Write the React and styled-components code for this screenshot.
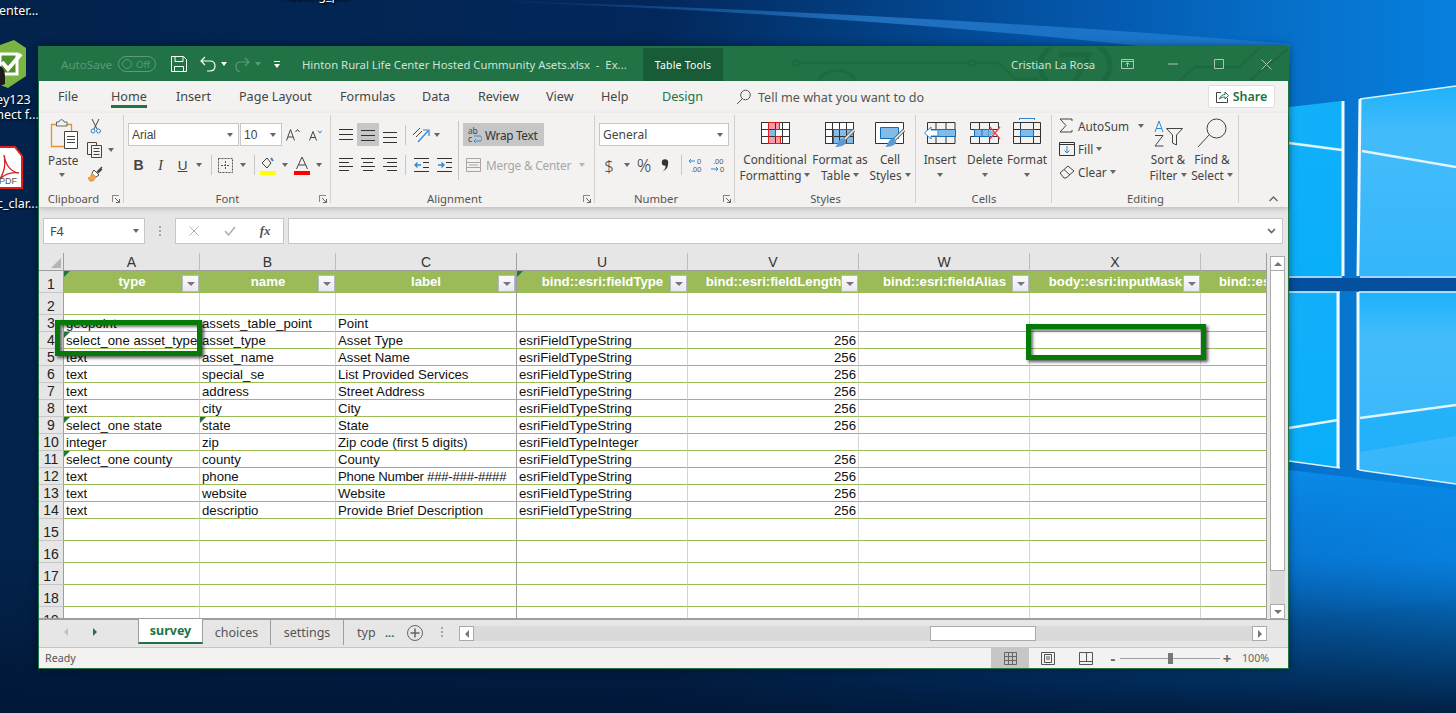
import React from "react";
import styled, { createGlobalStyle } from "styled-components";

const GlobalStyle = createGlobalStyle`
  html, body { margin: 0; padding: 0; height: 100%; overflow: hidden; }
  body { font-family: "Noto Sans", sans-serif; }
  * { box-sizing: border-box; }
`;

const BLUE = "#2b88d8";
const FILLBLUE = "#83bbe8";

//Desktop
const Desktop = styled.div`
  position: relative;
  width: 1456px;
  height: 713px;
  overflow: hidden;
  background:
    linear-gradient(180deg, rgba(0, 20, 50, 0) 78%, rgba(0, 22, 52, 0.9) 100%),
    linear-gradient(90deg, #03234c 0, #02275a 45%, #0458ad 75%, #0672cc 90%, #0680de 100%);
`;
const Wallpaper = styled.svg`
  position: absolute;
  left: 0;
  top: 0;
`;
const DeskLabel = styled.div`
  position: absolute;
  left: ${(p) => p.$x}px;
  top: ${(p) => p.$y}px;
  color: #fff;
  font-size: 12.5px;
  line-height: 15px;
  white-space: nowrap;
  text-shadow: 1px 1px 2px #000;
`;
const DeskIcon = styled.svg`
  position: absolute;
  left: 0;
  top: ${(p) => p.$y}px;
`;

//Window
const Window = styled.div`
  position: absolute;
  left: 38px;
  top: 46px;
  width: 1251px;
  height: 623px;
  display: flex;
  flex-direction: column;
  border: 1px solid #217346;
  background: #e6e6e6;
  box-shadow: 0 0 8px rgba(0, 0, 0, 0.45);
`;

const TitleBar = styled.div`
  position: relative;
  height: 34px;
  flex: none;
  display: flex;
  align-items: center;
  background: #217346;
  color: #cfe2d6;
  font-size: 11.3px;
`;
const Circuit = styled.svg`
  position: absolute;
  left: 0;
  top: 0;
`;
const AutoSave = styled.span`
  position: relative;
  margin-left: 22px;
  color: #5c9a78;
  font-size: 11.6px;
  width: 57px;
  flex: none;
`;
const Toggle = styled.span`
  position: relative;
  width: 38px;
  height: 16px;
  flex: none;
  border: 1px solid #5c9a78;
  border-radius: 8px;
  display: flex;
  align-items: center;
  gap: 4px;
  padding-left: 3px;
  color: #5c9a78;
  font-size: 9.5px;
  &::before {
    content: "";
    width: 8px;
    height: 8px;
    border-radius: 50%;
    border: 1px solid #5c9a78;
  }
`;
const TitleSlot = styled.span`
  position: relative;
  width: ${(p) => p.$w}px;
  padding-left: ${(p) => p.$pad || 0}px;
  flex: none;
  display: flex;
  align-items: center;
  justify-content: ${(p) => (p.$left ? "flex-start" : "center")};
  white-space: nowrap;
`;
const ContextTab = styled.div`
  position: relative;
  width: 80px;
  height: 33px;
  flex: none;
  margin-top: 1px;
  align-self: flex-start;
  display: flex;
  align-items: center;
  justify-content: center;
  background: #185c37;
  color: #fff;
  font-size: 10.5px;
  letter-spacing: 0.2px;
`;

const TabRow = styled.div`
  height: 32px;
  flex: none;
  display: flex;
  align-items: center;
  padding-left: 19px;
  background: #f3f2f1;
  color: #444;
  font-size: 12.6px;
`;
const Tab = styled.div`
  width: ${(p) => p.$w}px;
  flex: none;
  color: ${(p) => (p.$green ? "#217346" : "#444")};
  span {
    display: inline-block;
    height: 22px;
    line-height: 16px;
    padding-top: 3px;
    border-bottom: 3px solid ${(p) => (p.$active ? "#217346" : "transparent")};
  }
`;
const TellMe = styled.div`
  display: flex;
  align-items: center;
  gap: 7px;
  width: 472px;
  flex: none;
  color: #555;
`;
const ShareButton = styled.div`
  width: 67px;
  height: 23px;
  margin-bottom: 2px;
  display: flex;
  align-items: center;
  justify-content: center;
  gap: 4px;
  background: #fff;
  border: 1px solid #e1dfdd;
  border-radius: 2px;
  color: #217346;
  font-weight: 600;
  font-size: 12.5px;
`;

//Ribbon
const Ribbon = styled.div`
  position: relative;
  z-index: 1;
  height: 94px;
  flex: none;
  display: flex;
  padding-top: 2px;
  background: #f3f2f1;
  color: #444;
  font-size: 11.8px;
  box-shadow: 0 2px 5px rgba(0, 0, 0, 0.18);
`;
const Group = styled.div`
  position: relative;
  width: ${(p) => p.$w}px;
  height: 91px;
  flex: none;
  display: flex;
  flex-direction: column;
  background: linear-gradient(#d2d0ce, #d2d0ce) right top / 1px 88px no-repeat;
`;
const GroupBody = styled.div`
  flex: 1;
  display: flex;
  min-height: 0;
  padding-left: ${(p) => p.$pad || 0}px;
`;
const GroupLabel = styled.div`
  height: 14px;
  line-height: 14px;
  text-align: center;
  font-size: 11.3px;
  color: #555;
  white-space: nowrap;
  padding-right: ${(p) => p.$shift || 0}px;
`;
const Launcher = styled.svg`
  position: absolute;
  right: 4px;
  bottom: 3px;
`;
const Collapse = styled.svg`
  position: absolute;
  left: 1230px;
  top: 83px;
`;
const Stack = styled.div`
  display: flex;
  flex-direction: column;
  gap: 9px;
  padding-top: 8px;
  width: ${(p) => (p.$w ? `${p.$w}px` : "auto")};
  flex: none;
`;
const ToolRow = styled.div`
  display: flex;
  align-items: center;
  height: ${(p) => p.$h || 23}px;
`;
const Cell = styled.div`
  width: ${(p) => p.$w}px;
  height: 100%;
  flex: none;
  display: flex;
  align-items: center;
  justify-content: center;
  background: ${(p) => (p.$on ? "#c6c6c6" : "transparent")};
`;
const Caret = styled.i`
  display: block;
  flex: none;
  width: 0;
  height: 0;
  margin-left: ${(p) => p.$ml || 0}px;
  border-left: 3.5px solid transparent;
  border-right: 3.5px solid transparent;
  border-top: 4px solid ${(p) => p.$color || "#666"};
`;
const PasteCaret = styled(Caret)`
  margin: 5px 0 0 9px;
`;
const Divider = styled.i`
  display: block;
  width: 1px;
  height: ${(p) => p.$h || 20}px;
  background: #c8c6c4;
`;
const Combo = styled.div`
  width: ${(p) => p.$w}px;
  height: 23px;
  flex: none;
  display: flex;
  align-items: center;
  justify-content: space-between;
  padding: 0 5px 0 3px;
  margin-right: ${(p) => p.$mr || 0}px;
  background: #fff;
  border: 1px solid #c6c6c6;
  color: #444;
  font-size: 12px;
`;
const ComboArial = styled.span`
  font-family: "Liberation Sans", Arial, sans-serif;
  font-size: 12px;
`;
const Glyph = styled(Cell)`
  font-family: ${(p) => p.$font || "inherit"};
  font-size: ${(p) => p.$size}px;
  font-weight: ${(p) => p.$weight || 400};
  font-style: ${(p) => (p.$italic ? "italic" : "normal")};
  text-decoration: ${(p) => (p.$under ? "underline" : "none")};
`;
const VerticalRule = styled.div`
  width: 1px;
  height: 59px;
  margin-top: 6px;
  flex: none;
  background: #c8c6c4;
`;
const RightStack = styled(Stack)`
  padding-left: 4px;
`;
const WrapButton = styled.div`
  width: 81px;
  height: 23px;
  display: flex;
  align-items: center;
  gap: 3px;
  padding-left: 5px;
  background: #c6c6c6;
  color: #333;
  letter-spacing: -0.3px;
`;
const MergeButton = styled.div`
  display: flex;
  align-items: center;
  height: 20px;
  padding-left: 3px;
  gap: 5px;
  color: #a6a6a6;
  letter-spacing: -0.2px;
`;
const BigButton = styled.div`
  width: ${(p) => p.$w}px;
  flex: none;
  display: flex;
  flex-direction: column;
  align-items: center;
  padding-top: ${(p) => p.$top ?? 7}px;
  line-height: 16px;
  white-space: nowrap;
`;
const BigIcon = styled.div`
  height: ${(p) => p.$h ?? 29}px;
  flex: none;
  display: flex;
  align-items: flex-start;
`;
const BigLine = styled.div`
  display: flex;
  align-items: center;
  justify-content: center;
  gap: 3px;
  height: 16px;
`;
const SmallStack = styled.div`
  width: ${(p) => p.$w}px;
  flex: none;
  padding-left: 7px;
  margin-top: -1px;
`;
const SmallRow = styled.div`
  height: 23px;
  display: flex;
  align-items: center;
  white-space: nowrap;
  svg { margin-right: 3px; }
`;
const SmallIcon = styled.div`
  width: 19px;
  flex: none;
  display: flex;
`;
const PasteColumn = styled.div`
  width: 48px;
  flex: none;
  padding-left: 11px;
  padding-top: 4px;
  line-height: 16px;
`;
const PasteLabel = styled.div`
  margin: 3px 0 0 -2px;
`;
const ClipTools = styled.div`
  display: flex;
  flex-direction: column;
  gap: 8px;
  padding-top: 3px;
`;
const ClipTool = styled.div`
  display: flex;
  align-items: center;
  padding-left: ${(p) => p.$pad || 0}px;
  gap: 6px;
`;

//Formula bar
const FormulaArea = styled.div`
  height: 46px;
  flex: none;
  display: flex;
  padding: 11px 5px 9px 4px;
  background: #e6e6e6;
`;
const FormulaBox = styled.div`
  height: 26px;
  width: ${(p) => (p.$w ? `${p.$w}px` : "auto")};
  flex: ${(p) => (p.$w ? "none" : 1)};
  display: flex;
  align-items: center;
  background: #fff;
  border: 1px solid #c6c6c6;
  color: #444;
  font-size: 12.5px;
`;
const FormulaInput = styled(FormulaBox)`
  margin-left: 4px;
  justify-content: flex-end;
  padding-right: 6px;
`;
const NameBoxText = styled.span`
  flex: 1;
  padding-left: 6px;
`;
const NameCaret = styled(Caret)`
  margin-right: 5px;
`;
const Grip = styled.div`
  width: 30px;
  flex: none;
  display: flex;
  flex-direction: column;
  align-items: center;
  justify-content: center;
  gap: 2px;
  i {
    width: 2px;
    height: 2px;
    background: #a6a6a6;
    display: block;
  }
`;
const FormulaTool = styled.span`
  flex: 1;
  display: flex;
  justify-content: center;
  font-family: "Liberation Serif", serif;
  font-style: italic;
  font-weight: 700;
  font-size: 13px;
  color: ${(p) => p.$color};
`;

//Sheet
const SheetArea = styled.div`
  position: relative;
  height: 366px;
  flex: none;
  display: flex;
  background: #e6e6e6;
`;
const Grid = styled.div`
  width: 1228px;
  height: 366px;
  flex: none;
  display: grid;
  grid-template-columns: 25px 136px 136px 181px repeat(4, 171px) 66px;
  grid-template-rows: 18px 22px 22px repeat(12, 17px) repeat(5, 22px);
  font-family: "Liberation Sans", Arial, sans-serif;
  overflow: hidden;
  border-bottom: 1px solid #9e9e9e;
  border-right: 1px solid #9e9e9e;
`;
const Corner = styled.div`
  position: relative;
  border-bottom: 1px solid #9e9e9e;
  border-right: 1px solid #9e9e9e;
  &::after {
    content: "";
    position: absolute;
    right: 2px;
    bottom: 2px;
    border-left: 10px solid transparent;
    border-bottom: 10px solid #b4b4b4;
  }
`;
const ColLetter = styled.div`
  display: flex;
  align-items: center;
  justify-content: center;
  font-size: 14px;
  color: #333;
  border-bottom: 1px solid #9e9e9e;
  border-right: 1px solid ${(p) => (p.$hidden ? "#9e9e9e" : "#bdbdbd")};
`;
const RowNum = styled.div`
  display: flex;
  align-items: flex-end;
  justify-content: center;
  font-size: 14px;
  line-height: 14px;
  color: #222;
  padding-bottom: 1px;
  border-bottom: 1px solid #c6c6c6;
  border-right: 1px solid #9e9e9e;
`;
const flagged = `
  &::before {
    content: "";
    position: absolute;
    left: 0;
    top: 0;
    border-top: 6px solid #217346;
    border-right: 6px solid transparent;
  }
`;
const DataCell = styled.div`
  position: relative;
  background: #fff;
  padding: 1px 2px 0;
  font-size: 13.2px;
  line-height: 15px;
  color: #111;
  white-space: nowrap;
  overflow: hidden;
  text-align: ${(p) => (p.$right ? "right" : "left")};
  letter-spacing: ${(p) => (p.$tight ? "-0.25px" : "normal")};
  border-bottom: 1px solid #9bbb59;
  border-right: 1px solid ${(p) => (p.$hidden ? "#9e9e9e" : "#d4d4d4")};
  ${(p) => (p.$flag ? flagged : "")}
`;
const HeadCell = styled.div`
  position: relative;
  background: #9bbb59;
  color: #fff;
  font-weight: 700;
  font-size: 13.2px;
  line-height: 21px;
  white-space: nowrap;
  overflow: hidden;
  text-align: ${(p) => (p.$clip ? "left" : "center")};
  padding-left: ${(p) => (p.$clip ? 18 : 0)}px;
  border-right: ${(p) => (p.$hidden ? "1px solid #9e9e9e" : "none")};
  ${(p) => (p.$flag ? flagged : "")}
`;
const FilterButton = styled.div`
  position: absolute;
  right: 1px;
  top: 4px;
  width: 17px;
  height: 17px;
  display: flex;
  align-items: center;
  justify-content: center;
  background: linear-gradient(180deg, #fbfbfd, #e8e9f1);
  border: 1px solid #b5b9c6;
`;
const Highlight = styled.div`
  position: absolute;
  left: ${(p) => p.$x}px;
  top: ${(p) => p.$y}px;
  width: ${(p) => p.$w}px;
  height: 36px;
  border: 5px solid #067a06;
  box-shadow: 2px 2px 3px rgba(0, 0, 0, 0.65), inset 2px 2px 3px rgba(0, 0, 0, 0.55);
`;
const VScroll = styled.div`
  width: 15px;
  margin-left: 3px;
  padding-top: 3px;
  display: flex;
  flex-direction: column;
`;
const ScrollButton = styled.div`
  height: 15px;
  width: 15px;
  flex: none;
  display: flex;
  align-items: center;
  justify-content: center;
  background: #fff;
  border: 1px solid #ababab;
`;
const VThumb = styled.div`
  height: 300px;
  flex: none;
  background: #fff;
  border: 1px solid #ababab;
  border-top: none;
`;
const VTrack = styled.div`
  flex: 1;
  background: #dadada;
`;
const Up = styled.i`
  border-left: 4px solid transparent;
  border-right: 4px solid transparent;
  border-bottom: 4px solid #777;
`;
const Down = styled.i`
  border-left: 4px solid transparent;
  border-right: 4px solid transparent;
  border-top: 4px solid #777;
`;
const Side = styled.i`
  border-top: 4px solid transparent;
  border-bottom: 4px solid transparent;
  ${(p) => (p.$left ? "border-right" : "border-left")}: 4px solid ${(p) => p.$color || "#777"};
`;

//Sheet tabs
const TabsBar = styled.div`
  height: 29px;
  flex: none;
  display: flex;
  align-items: flex-start;
  border-top: 1px solid #9e9e9e;
  border-bottom: 1px solid #c6c6c6;
  background: #e6e6e6;
  color: #555;
  font-size: 12.5px;
`;
const TabNav = styled.div`
  width: 99px;
  height: 24px;
  flex: none;
  display: flex;
  align-items: center;
  gap: 25px;
  padding-left: 25px;
`;
const SheetTab = styled.div`
  width: ${(p) => p.$w}px;
  height: 25px;
  flex: none;
  display: flex;
  align-items: center;
  justify-content: ${(p) => (p.$left ? "flex-start" : "center")};
  padding-left: ${(p) => (p.$left ? 13 : 0)}px;
  margin-top: ${(p) => (p.$active ? -1 : 0)}px;
  background: ${(p) => (p.$active ? "#fff" : "transparent")};
  color: ${(p) => (p.$active ? "#217346" : "#555")};
  font-weight: ${(p) => (p.$active ? 700 : 400)};
  border-left: ${(p) => (p.$active ? "1px solid #9e9e9e" : "none")};
  border-right: 1px solid ${(p) => (p.$active ? "#9e9e9e" : p.$plain ? "transparent" : "#9e9e9e")};
  border-bottom: ${(p) => (p.$active ? "2px solid #217346" : "none")};
`;
const TabMore = styled.div`
  width: 48px;
  height: 25px;
  flex: none;
  display: flex;
  align-items: center;
  gap: 13px;
  color: #217346;
  font-weight: 700;
  font-size: 11px;
`;
const TabGrip = styled(Grip)`
  width: 18px;
  height: 24px;
  margin-right: 8px;
`;
const HScroll = styled.div`
  width: 808px;
  height: 15px;
  margin-top: 6px;
  flex: none;
  display: flex;
  background: #dadada;
`;
const HThumb = styled.div`
  width: 106px;
  margin-left: 456px;
  flex: none;
  background: #fff;
  border: 1px solid #ababab;
`;
const Spring = styled.div`
  flex: 1;
`;

//Status bar
const StatusBar = styled.div`
  height: 20px;
  flex: none;
  display: flex;
  align-items: center;
  background: #f3f2f1;
  color: #555;
  font-size: 10.7px;
`;
const StatusText = styled.span`
  width: 952px;
  padding-left: 6px;
  flex: none;
`;
const ViewButton = styled.div`
  width: 38px;
  height: 100%;
  flex: none;
  display: flex;
  align-items: center;
  justify-content: center;
  background: ${(p) => (p.$on ? "#c6c6c6" : "transparent")};
`;
const Zoomer = styled.div`
  display: flex;
  align-items: center;
  margin-left: 3px;
`;
const ZoomSign = styled.span`
  width: 10px;
  font-size: 15px;
  font-weight: 700;
  line-height: 16px;
  text-align: center;
  color: #666;
`;
const ZoomTrack = styled.div`
  position: relative;
  width: 100px;
  height: 1px;
  margin: 0 2px;
  background: #9e9e9e;
`;
const ZoomThumb = styled.i`
  position: absolute;
  left: 48px;
  top: -5px;
  width: 5px;
  height: 11px;
  background: #777;
`;
const ZoomValue = styled.span`
  margin-left: 10px;
  color: #666;
`;

//Icons
const Svg = ({ w, h, children, ...rest }) => (
  <svg width={w} height={h} viewBox={`0 0 ${w} ${h}`} fill="none" style={{ display: "block", flex: "none" }} {...rest}>
    {children}
  </svg>
);

const AlignV = ({ at }) => (
  <Svg w={14} h={16}>
    {[0, 5, 10].map((d) => (
      <path key={d} d={`M0 ${at + d}.5H14`} stroke="#333" />
    ))}
  </Svg>
);
const AlignH = ({ mode }) => {
  const x = (w) => (mode === "l" ? [0, w] : mode === "r" ? [14 - w, 14] : [(14 - w) / 2, (14 + w) / 2]);
  return (
    <Svg w={14} h={14}>
      {[14, 10, 14, 10].map((w, i) => (
        <path key={i} d={`M${x(w)[0]} ${i * 4 + 0.5}H${x(w)[1]}`} stroke="#333" />
      ))}
    </Svg>
  );
};
const Indent = ({ flip }) => (
  <Svg w={15} h={14}>
    <path d="M0 .5H15M0 13.5H15" stroke="#333" />
    <path d="M9 4.5H15M9 9.5H15" stroke="#333" />
    <path d={flip ? "M1 7H7M4.5 4.5L7 7L4.5 9.5" : "M7 7H1M3.5 4.5L1 7L3.5 9.5"} stroke={BLUE} strokeWidth="1.3" />
  </Svg>
);
const Launch = () => (
  <Launcher width="8" height="8" viewBox="0 0 8 8" fill="none">
    <path d="M0 .5H7M.5 0V7" stroke="#888" />
    <path d="M3 3L7.5 7.5M7.5 4V7.5H4" stroke="#666" />
  </Launcher>
);
const SheetGrid = ({ children }) => (
  <>
    <path d="M.5 .5H28.5V21.5H.5Z" fill="#fff" stroke="#333" />
    {children}
    <path d="M.5 7.5H28.5M.5 14.5H28.5M7.5 .5V21.5M14.5 .5V21.5M21.5 .5V21.5" stroke="#333" />
    <path d="M.5 .5H28.5V21.5H.5Z" stroke="#333" />
  </>
);
const Brush = () => (
  <>
    <path d="M29 8L20 17" stroke="#666" strokeWidth="3.4" />
    <path d="M29 8L20 17" stroke="#f3f2f1" strokeWidth="1.6" />
    <path d="M16 17C20 16 22 18 21 21C19 24 14 25 10 25C13 23 13 19 16 17Z" fill="#5b9bd5" />
  </>
);

const ROWS = [
  ["geopoint", "assets_table_point", "Point", "", ""],
  ["select_one asset_type", "asset_type", "Asset Type", "esriFieldTypeString", "256"],
  ["text", "asset_name", "Asset Name", "esriFieldTypeString", "256"],
  ["text", "special_se", "List Provided Services", "esriFieldTypeString", "256"],
  ["text", "address", "Street Address", "esriFieldTypeString", "256"],
  ["text", "city", "City", "esriFieldTypeString", "256"],
  ["select_one state", "state", "State", "esriFieldTypeString", "256"],
  ["integer", "zip", "Zip code (first 5 digits)", "esriFieldTypeInteger", ""],
  ["select_one county", "county", "County", "esriFieldTypeString", "256"],
  ["text", "phone", "Phone Number ###-###-####", "esriFieldTypeString", "256"],
  ["text", "website", "Website", "esriFieldTypeString", "256"],
  ["text", "descriptio", "Provide Brief Description", "esriFieldTypeString", "256"],
];
const FLAGS = { 4: [0], 9: [0, 1], 11: [0] };
const LETTERS = ["A", "B", "C", "U", "V", "W", "X", ""];
const HEADS = ["type", "name", "label", "bind::esri:fieldType", "bind::esri:fieldLength", "bind::esri:fieldAlias", "body::esri:inputMask"];

const renderRow = (num, values = []) => (
  <React.Fragment key={num}>
    <RowNum>{num}</RowNum>
    {Array.from({ length: 8 }).map((_, i) => (
      <DataCell
        key={i}
        $right={i === 4}
        $hidden={i === 2}
        $flag={(FLAGS[num] || []).includes(i)}
        $tight={(values[i] || "").includes("#")}
      >
        {values[i] || ""}
      </DataCell>
    ))}
  </React.Fragment>
);

const App = () => {
  return (
    <Desktop>
      <GlobalStyle />
      <Wallpaper width="1456" height="713" viewBox="0 0 1456 713" fill="none">
        <defs>
          <linearGradient id="streak" x1="0" x2="1">
            <stop offset="0" stopColor="#2a7fd0" stopOpacity="0" />
            <stop offset="0.5" stopColor="#2a7fd0" stopOpacity="0.75" />
            <stop offset="1" stopColor="#2a8ae0" stopOpacity="0.5" />
          </linearGradient>
          <linearGradient id="pane" x1="0" x2="0" y1="0" y2="1">
            <stop offset="0" stopColor="#12b0fb" />
            <stop offset="1" stopColor="#09aef9" />
          </linearGradient>
          <linearGradient id="paneR" x1="0" x2="0" y1="0" y2="1">
            <stop offset="0" stopColor="#1fb2fa" />
            <stop offset="0.25" stopColor="#44bcfb" />
            <stop offset="1" stopColor="#35b6fa" />
          </linearGradient>
          <linearGradient id="lowLight" x1="0" x2="0" y1="0" y2="1">
            <stop offset="0" stopColor="#0a8ae8" />
            <stop offset="1" stopColor="#0878d8" stopOpacity="0" />
          </linearGradient>
        </defs>
        <path d="M460 0C700 8 1000 26 1290 64L1290 44C1000 20 700 6 460 0Z" fill="url(#streak)" />
        <path d="M1289 470L1456 490V600L1289 620Z" fill="url(#lowLight)" />
        <path d="M1289 278H1456V291H1289Z" fill="#04509f" />
        <path d="M1289 107L1342 101V276H1289Z" fill="url(#pane)" stroke="none" />
        <path d="M1360 99L1456 86V276H1360Z" fill="url(#paneR)" />
        <path d="M1289 292H1340V468L1289 461Z" fill="url(#pane)" />
        <path d="M1359 292H1456V484L1359 470Z" fill="url(#paneR)" />
        <path d="M1359 418L1456 405V436L1359 452Z" fill="#0cacf8" opacity="0.5" />
        <path d="M1289 143L1342 150M1362 151L1456 167M1360 418L1456 405M1289 428L1338 420" stroke="#dff5ff" strokeWidth="2.5" />
        <path d="M1289 277H1342M1360 277H1456M1359 292H1456M1289 292H1340M1289 461L1340 468M1359 470L1456 484M1360 99L1456 86" stroke="#d6f2ff" strokeWidth="1.5" />
        <path d="M1343 101V276M1360 99L1358 276M1338 292V468M1358 292V470" stroke="#eefaff" strokeWidth="3" />
      </Wallpaper>

      <DeskLabel $x={280} $y={-12}>Hosting_p...</DeskLabel>
      <DeskLabel $x={-9} $y={3}>Center...</DeskLabel>
      <DeskLabel $x={-30} $y={92}>Survey123</DeskLabel>
      <DeskLabel $x={-27} $y={107}>Connect f...</DeskLabel>
      <DeskLabel $x={-3} $y={196}>c_clar...</DeskLabel>
      <DeskIcon $y={40} width="27" height="48" viewBox="0 0 27 48">
        <path d="M0 5L14 0L26 8V36L8 48L0 45Z" fill="#7ab542" />
        <path d="M0 14H17V34H0Z" fill="#4f8f2c" stroke="#fff" strokeWidth="3" />
        <path d="M2 22L8 29L21 14" fill="none" stroke="#fff" strokeWidth="4" />
        <path d="M0 26C4 28 5 32 5 38V44L0 46Z" fill="#1c1c1c" />
      </DeskIcon>
      <DeskIcon $y={146} width="23" height="44" viewBox="0 0 23 44">
        <path d="M-2 1H15L22 10V42H-2Z" fill="#fff" stroke="#e01e1e" strokeWidth="2" />
        <path d="M4 9C6 20 11 26 19 27C12 26 5 28 0 33C4 26 6 20 4 9Z" fill="none" stroke="#d42020" strokeWidth="1.3" />
        <text x="-1" y="38" fontFamily="Liberation Sans" fontSize="9" fill="#555">PDF</text>
      </DeskIcon>

      <Window>
        <TitleBar>
          <Circuit width="1249" height="34" viewBox="0 0 1249 34" fill="none">
            <circle cx="757" cy="16" r="3" stroke="#1d6a40" strokeWidth="2" />
            <path d="M760 16H930" stroke="#1d6a40" strokeWidth="2.5" />
            <circle cx="933" cy="16" r="3" stroke="#1d6a40" strokeWidth="2" />
            <path d="M936 16H960L976 32H1000" stroke="#1d6a40" strokeWidth="2.5" />
            <path d="M780 34C784 20 812 20 816 34" stroke="#1d6a40" strokeWidth="3" />
            <path d="M1012 0C998 10 998 24 1008 34M1060 0C1074 10 1074 24 1064 34" stroke="#1d6a40" strokeWidth="5" />
            <path d="M1020 8H1050L1036 34" stroke="#1d6a40" strokeWidth="5" />
            <path d="M1140 34L1156 20H1200L1222 0M1210 34L1249 2" stroke="#1d6a40" strokeWidth="2.5" />
          </Circuit>
          <AutoSave>AutoSave</AutoSave>
          <Toggle>Off</Toggle>
          <TitleSlot $w={15} />
          <TitleSlot $w={16}>
            <Svg w={16} h={16}>
              <path d="M.5 .5H12.5L15.5 3.5V15.5H.5Z" stroke="#fff" />
              <path d="M4 .5V5.5H12V.5M3.5 15.5V10.5H12.5V15.5" stroke="#fff" />
            </Svg>
          </TitleSlot>
          <TitleSlot $w={30} $pad={12}>
            <Svg w={16} h={16}>
              <path d="M5 1L1 5L5 9M1 5H10C13 5 15 7 15 10C15 13 13 15 10 15H7" stroke="#fff" strokeWidth="1.2" />
            </Svg>
          </TitleSlot>
          <TitleSlot $w={14}><Caret $color="#fff" /></TitleSlot>
          <TitleSlot $w={22}>
            <Svg w={15} h={15}>
              <path d="M10 1L14 5L10 9M14 5H5C2 5 1 7 1 10C1 12 2 14 5 15" stroke="#5c9a78" strokeWidth="1.2" />
            </Svg>
          </TitleSlot>
          <TitleSlot $w={10}><Caret $color="#5c9a78" /></TitleSlot>
          <TitleSlot $w={28}>
            <Svg w={8} h={9}>
              <path d="M1 1.5H7" stroke="#fff" />
              <path d="M1 4L4 8L7 4Z" fill="#fff" />
            </Svg>
          </TitleSlot>
          <TitleSlot $w={352} $pad={11} $left>
            Hinton Rural Life Center Hosted Cummunity Asets.xlsx&nbsp; -&nbsp; Ex...
          </TitleSlot>
          <ContextTab>Table Tools</ContextTab>
          <TitleSlot $w={288} />
          <TitleSlot $w={97} $left>Cristian La Rosa</TitleSlot>
          <TitleSlot $w={12} />
          <TitleSlot $w={14}>
            <Svg w={13} h={10}>
              <path d="M.5 .5H12.5V9.5H.5ZM.5 2.5H12.5" stroke="#a8c9b5" />
              <path d="M6.5 8V4M4.5 5.5L6.5 3.5L8.5 5.5" stroke="#a8c9b5" />
            </Svg>
          </TitleSlot>
          <TitleSlot $w={78}><Svg w={10} h={2}><path d="M0 1H10" stroke="#a8c9b5" /></Svg></TitleSlot>
          <TitleSlot $w={14}><Svg w={10} h={10}><path d="M.5 .5H9.5V9.5H.5Z" stroke="#a8c9b5" /></Svg></TitleSlot>
          <TitleSlot $w={20} />
          <TitleSlot $w={40}><Svg w={11} h={11}><path d="M.5 .5L10.5 10.5M10.5 .5L.5 10.5" stroke="#a8c9b5" /></Svg></TitleSlot>
        </TitleBar>

        <TabRow>
          <Tab $w={53}><span>File</span></Tab>
          <Tab $w={65} $active><span>Home</span></Tab>
          <Tab $w={63}><span>Insert</span></Tab>
          <Tab $w={101}><span>Page Layout</span></Tab>
          <Tab $w={82}><span>Formulas</span></Tab>
          <Tab $w={56}><span>Data</span></Tab>
          <Tab $w={68}><span>Review</span></Tab>
          <Tab $w={55}><span>View</span></Tab>
          <Tab $w={61}><span>Help</span></Tab>
          <Tab $w={74} $green><span>Design</span></Tab>
          <TellMe>
            <Svg w={15} h={16}>
              <circle cx="9.5" cy="6" r="4.8" stroke="#555" />
              <path d="M6 10L1 15" stroke="#555" />
            </Svg>
            Tell me what you want to do
          </TellMe>
          <ShareButton>
            <Svg w={13} h={13}>
              <path d="M5 2.5H.5V12.5H11.5V8" stroke="#444" />
              <path d="M3.5 9C4 6 7 4.5 9 4.5V2L12.5 5.5L9 9V7C7 7 5 7.5 3.5 9Z" stroke="#217346" />
            </Svg>
            Share
          </ShareButton>
        </TabRow>

        <Ribbon>
          <Group $w={85}>
            <GroupBody>
              <PasteColumn>
                <Svg w={28} h={30}>
                  <path d="M1.5 5.5H21.5V27.5H1.5Z" stroke="#e8912d" strokeWidth="1.3" />
                  <path d="M6.5 5V3H9C9 0 14 0 14 3H17V7H6.5Z" fill="#f3f2f1" stroke="#666" />
                  <path d="M14.5 12.5H27.5V29.5H14.5Z" fill="#fff" stroke="#444" />
                  <path d="M17 17.5H25M17 20.5H25M17 23.5H25" stroke="#444" />
                </Svg>
                <PasteLabel>Paste</PasteLabel>
                <PasteCaret />
              </PasteColumn>
              <ClipTools>
                <ClipTool $pad={3}>
                  <Svg w={11} h={16}>
                    <path d="M2 1L7 11M9 1L4 11" stroke="#444" />
                    <circle cx="3" cy="13" r="2" stroke={BLUE} />
                    <circle cx="8.500" cy="13" r="2" stroke={BLUE} />
                  </Svg>
                </ClipTool>
                <ClipTool>
                  <Svg w={15} h={16}>
                    <path d="M.5 .5H9.500V12.500H.5Z" stroke="#444" />
                    <path d="M4.500 3.500H14.500V15.500H4.500Z" fill="#f3f2f1" stroke="#444" />
                    <path d="M6.500 6.500H12.500M6.500 9.500H12.500M6.500 12.500H12.500" stroke="#444" />
                  </Svg>
                  <Caret />
                </ClipTool>
                <ClipTool>
                  <Svg w={16} h={16}>
                    <path d="M10 6L15 1M11 7L15 3" stroke="#444" strokeWidth="1.4" />
                    <path d="M7 4L12 9L9 11L5 7Z" fill="#fff" stroke="#444" />
                    <path d="M5 7L9 11L6 15H3L1 12C3 12 4 10 5 7Z" fill="#f2a65a" stroke="#e8912d" />
                  </Svg>
                </ClipTool>
              </ClipTools>
            </GroupBody>
            <GroupLabel $shift={16}>Clipboard</GroupLabel>
            <Launch />
          </Group>

          <Group $w={207}>
            <GroupBody $pad={4}>
              <Stack>
                <ToolRow>
                  <Combo $w={111} $mr={1}>
                    <ComboArial>Arial</ComboArial>
                    <Caret />
                  </Combo>
                  <Combo $w={42}>
                    <ComboArial>10</ComboArial>
                    <Caret />
                  </Combo>
                  <Cell $w={22}>
                    <Svg w={14} h={13}>
                      <path d="M.5 12.5L4.500 1.500L8.500 12.500M2 9H7" stroke="#444" />
                      <path d="M9.500 4L11.500 1.500L13.500 4" stroke="#444" />
                    </Svg>
                  </Cell>
                  <Cell $w={22}>
                    <Svg w={13} h={12}>
                      <path d="M.5 11.500L4 2.500L7.500 11.500M1.800 8.500H6.200" stroke="#444" />
                      <path d="M9 1.500L11 4L13 1.500" stroke={BLUE} />
                    </Svg>
                  </Cell>
                </ToolRow>
                <ToolRow $h={20}>
                  <Glyph $w={21} $font="Liberation Sans" $weight={700} $size={14}>B</Glyph>
                  <Glyph $w={23} $font="Liberation Serif" $italic $size={15}>I</Glyph>
                  <Glyph $w={21} $font="Liberation Sans" $under $size={13.5}>U</Glyph>
                  <Cell $w={12}><Caret /></Cell>
                  <Cell $w={12}><Divider /></Cell>
                  <Cell $w={16}>
                    <Svg w={15} h={15}>
                      <path d="M.5 .5H14.500V14.500H.5Z" stroke="#555" strokeDasharray="2 1" />
                      <path d="M7.500 3V12M3 7.500H12" stroke="#555" strokeDasharray="2 1" />
                    </Svg>
                  </Cell>
                  <Cell $w={20}><Caret /></Cell>
                  <Cell $w={2}><Divider /></Cell>
                  <Cell $w={26}>
                    <Svg w={16} h={19}>
                      <path d="M2 7L7 2L11 7L7 12Z" stroke="#444" />
                      <path d="M11 2L13 5" stroke={BLUE} strokeWidth="2" />
                      <path d="M0 15H16V19H0Z" fill="#ffff00" />
                    </Svg>
                  </Cell>
                  <Cell $w={8}><Caret /></Cell>
                  <Cell $w={26}>
                    <Svg w={16} h={19}>
                      <path d="M2.500 13L8 1L13.500 13M4.500 9H11.500" stroke="#444" />
                      <path d="M0 15H16V19H0Z" fill="#f00" />
                    </Svg>
                  </Cell>
                  <Cell $w={8}><Caret /></Cell>
                </ToolRow>
              </Stack>
            </GroupBody>
            <GroupLabel>Font</GroupLabel>
            <Launch />
          </Group>

          <Group $w={264}>
            <GroupBody $pad={4}>
              <Stack $w={123}>
                <ToolRow>
                  <Cell $w={22}><AlignV at={2} /></Cell>
                  <Cell $w={22} $on><AlignV at={3} /></Cell>
                  <Cell $w={22}><AlignV at={5} /></Cell>
                  <Cell $w={8}><Divider /></Cell>
                  <Cell $w={24}>
                    <Svg w={18} h={17}>
                      <path d="M1 9L8 2M4 11L10 5" stroke="#444" />
                      <path d="M6 16L16 5M11 4H17V10" stroke={BLUE} strokeWidth="1.2" />
                    </Svg>
                  </Cell>
                  <Cell $w={8}><Caret /></Cell>
                </ToolRow>
                <ToolRow $h={20}>
                  <Cell $w={22}><AlignH mode="l" /></Cell>
                  <Cell $w={22}><AlignH mode="c" /></Cell>
                  <Cell $w={22}><AlignH mode="r" /></Cell>
                  <Cell $w={8}><Divider /></Cell>
                  <Cell $w={24}><Indent /></Cell>
                  <Cell $w={22}><Indent flip /></Cell>
                </ToolRow>
              </Stack>
              <VerticalRule />
              <RightStack>
                <WrapButton>
                  <Svg w={14} h={16}>
                    <text x="0" y="7" fontFamily="Noto Sans" fontSize="8.500" fill="#444">ab</text>
                    <text x="0" y="15" fontFamily="Noto Sans" fontSize="8.500" fill="#444">c</text>
                    <path d="M8 14H12C14.500 14 14.500 9 12 9H6M8 12L6 14L8 16" stroke={BLUE} />
                  </Svg>
                  Wrap Text
                </WrapButton>
                <MergeButton>
                  <Svg w={15} h={14}>
                    <path d="M.5 .5H14.500V13.500H.5ZM.5 4.500H14.500M.5 9.500H14.500" stroke="#a6a6a6" />
                    <path d="M3 7H12" stroke="#a6a6a6" />
                  </Svg>
                  Merge &amp; Center
                  <Caret $color="#b5b5b5" $ml={3} />
                </MergeButton>
              </RightStack>
            </GroupBody>
            <GroupLabel $shift={17}>Alignment</GroupLabel>
            <Launch />
          </Group>

          <Group $w={140}>
            <GroupBody $pad={4}>
              <Stack>
                <Combo $w={130}>
                  <span>General</span>
                  <Caret />
                </Combo>
                <ToolRow $h={20}>
                  <Glyph $w={20} $size={17} $weight={300}>$</Glyph>
                  <Cell $w={16}><Caret /></Cell>
                  <Glyph $w={18} $size={18} $weight={300}>%</Glyph>
                  <Cell $w={24}>
                    <Svg w={8} h={13}>
                      <circle cx="4" cy="3.500" r="3.200" fill="#333" />
                      <path d="M7 4C7.500 8 5 11 1.500 12.500C4 10.500 5 8 4.500 6Z" fill="#333" />
                    </Svg>
                  </Cell>
                  <Cell $w={8}><Divider /></Cell>
                  <Cell $w={22}>
                    <Svg w={16} h={16}>
                      <path d="M1 4H7M3 2L1 4L3 6" stroke={BLUE} />
                      <text x="9" y="7" fontFamily="Liberation Sans" fontSize="7.500" fill="#555">0</text>
                      <text x="3" y="15" fontFamily="Liberation Sans" fontSize="7.500" fill="#555">.00</text>
                    </Svg>
                  </Cell>
                  <Cell $w={22}>
                    <Svg w={16} h={16}>
                      <text x="3" y="7" fontFamily="Liberation Sans" fontSize="7.500" fill="#555">.00</text>
                      <path d="M1 12H8M6 10L8 12L6 14" stroke={BLUE} />
                      <text x="10" y="15" fontFamily="Liberation Sans" fontSize="7.500" fill="#555">0</text>
                    </Svg>
                  </Cell>
                </ToolRow>
              </Stack>
            </GroupBody>
            <GroupLabel $shift={18}>Number</GroupLabel>
            <Launch />
          </Group>

          <Group $w={181}>
            <GroupBody>
              <BigButton $w={80}>
                <BigIcon>
                  <Svg w={29} h={22}>
                    <SheetGrid>
                      <path d="M7 0H19V7H7ZM7 14H19V22H7Z" fill="#f79ca6" />
                      <path d="M7 7H14V14H7Z" fill={FILLBLUE} />
                    </SheetGrid>
                    <path d="M7.500 .5H18.500V7.500H14.500V14.500H19.500V21.500H7.500Z" stroke="#e01e1e" />
                  </Svg>
                </BigIcon>
                <BigLine>Conditional</BigLine>
                <BigLine>Formatting <Caret /></BigLine>
              </BigButton>
              <BigButton $w={50}>
                <BigIcon>
                  <Svg w={30} h={26}>
                    <SheetGrid>
                      <path d="M9 7H28V21H9Z" fill={FILLBLUE} />
                    </SheetGrid>
                    <path d="M9 7.500H28M8.500 7V21M8.500 21.500H28" stroke="#106ebe" />
                    <Brush />
                  </Svg>
                </BigIcon>
                <BigLine>Format as</BigLine>
                <BigLine>Table <Caret /></BigLine>
              </BigButton>
              <BigButton $w={50}>
                <BigIcon>
                  <Svg w={30} h={26}>
                    <path d="M.5 .5H28.500V21.500H.5Z" fill="#fff" stroke="#333" />
                    <path d="M5.500 5.500H23.500V16.500H5.500Z" fill={FILLBLUE} stroke="#106ebe" />
                    <Brush />
                  </Svg>
                </BigIcon>
                <BigLine>Cell</BigLine>
                <BigLine>Styles <Caret /></BigLine>
              </BigButton>
            </GroupBody>
            <GroupLabel>Styles</GroupLabel>
          </Group>

          <Group $w={136}>
            <GroupBody>
              <BigButton $w={48}>
                <BigIcon>
                  <Svg w={32} h={22}>
                    <path d="M3.500 .5H31V21.500H3.500ZM3.500 7.500H31M3.500 14.500H31M12 .5V21.500M22 .5V21.500" stroke="#333" />
                    <path d="M12 7.500H31.500V14.500H12Z" fill={FILLBLUE} stroke="#106ebe" />
                    <path d="M.5 11L7 5V8H14V14H7V17Z" fill="#fff" stroke={BLUE} />
                  </Svg>
                </BigIcon>
                <BigLine>Insert</BigLine>
                <BigLine><Caret /></BigLine>
              </BigButton>
              <BigButton $w={42}>
                <BigIcon>
                  <Svg w={31} h={22}>
                    <path d="M.5 .5H28.500V7.500M.5 .5V7.500H28.500M.5 14.500V21.500H28.500V14.500H.5M9.500 .5V7.500M19.500 .5V7.500M9.500 14.500V21.500M19.500 14.500V21.500" stroke="#333" />
                    <path d="M4.500 7.500H19V14.500H4.500Z" fill={FILLBLUE} stroke="#106ebe" />
                    <path d="M12 7.500V14.500" stroke="#106ebe" />
                    <path d="M19 7L25 11L19 15Z" fill={FILLBLUE} />
                    <path d="M20 5L30 17M30 5L20 17" stroke="#e8474c" strokeWidth="1.3" />
                  </Svg>
                </BigIcon>
                <BigLine>Delete</BigLine>
                <BigLine><Caret /></BigLine>
              </BigButton>
              <BigButton $w={42} $top={3}>
                <BigIcon $h={33}>
                  <Svg w={29} h={26}>
                    <path d="M6 .5H22M6.500 0V2M21.500 0V2" stroke={BLUE} />
                    <path d="M.5 4.500H27.500V25.500H.5ZM.5 11.500H27.500M.5 18.500H27.500M7.500 4.500V25.500M20.500 4.500V25.500" stroke="#333" />
                    <path d="M7.500 11.500H20.500V18.500H7.500Z" fill={FILLBLUE} stroke="#106ebe" />
                  </Svg>
                </BigIcon>
                <BigLine>Format</BigLine>
                <BigLine><Caret /></BigLine>
              </BigButton>
            </GroupBody>
            <GroupLabel>Cells</GroupLabel>
          </Group>

          <Group $w={187}>
            <GroupBody>
              <SmallStack $w={94}>
                <SmallRow>
                  <SmallIcon>
                    <Svg w={14} h={15}>
                      <path d="M13 3V1H1L7 7.500L1 14H13V12" stroke="#444" />
                    </Svg>
                  </SmallIcon>
                  AutoSum <Caret $ml={9} />
                </SmallRow>
                <SmallRow>
                  <SmallIcon>
                    <Svg w={16} h={14}>
                      <path d="M.5 .5H15.500V13.500H.5ZM.5 2.500H15.500" stroke="#333" />
                      <path d="M8 4V11M5.500 8.500L8 11L10.500 8.500" stroke={BLUE} />
                    </Svg>
                  </SmallIcon>
                  Fill <Caret $ml={3} />
                </SmallRow>
                <SmallRow>
                  <SmallIcon>
                    <Svg w={16} h={14}>
                      <path d="M1 8L9 1L15 6L7 13H5Z" stroke="#444" />
                      <path d="M5 4.500L11 10" stroke="#444" />
                    </Svg>
                  </SmallIcon>
                  Clear <Caret $ml={3} />
                </SmallRow>
              </SmallStack>
              <BigButton $w={44} $top={5}>
                <BigIcon $h={31}>
                  <Svg w={29} h={27}>
                    <path d="M1 12L5 1L9 12M2.500 8.500H7.500" stroke={BLUE} />
                    <path d="M1 15.500H9L1 26H9.500" stroke="#444" />
                    <path d="M12.500 8.500H28.500L22.500 15V25L18.500 23V15Z" stroke="#444" />
                  </Svg>
                </BigIcon>
                <BigLine>Sort &amp;</BigLine>
                <BigLine>Filter <Caret /></BigLine>
              </BigButton>
              <BigButton $w={44} $top={3}>
                <BigIcon $h={33}>
                  <Svg w={30} h={30}>
                    <circle cx="19.500" cy="10.500" r="9.500" stroke="#444" />
                    <path d="M12 17L1 29" stroke="#444" />
                  </Svg>
                </BigIcon>
                <BigLine>Find &amp;</BigLine>
                <BigLine>Select <Caret /></BigLine>
              </BigButton>
            </GroupBody>
            <GroupLabel>Editing</GroupLabel>
          </Group>
          <Collapse width="9" height="6" viewBox="0 0 9 6" fill="none">
            <path d="M.5 5L4.500 1L8.500 5" stroke="#666" strokeWidth="1.4" />
          </Collapse>
        </Ribbon>

        <FormulaArea>
          <FormulaBox $w={102}>
            <NameBoxText>F4</NameBoxText>
            <NameCaret />
          </FormulaBox>
          <Grip><i /><i /><i /></Grip>
          <FormulaBox $w={109}>
            <FormulaTool $color="#b0b0b0">
              <Svg w={10} h={10}><path d="M.5 .5L9.500 9.500M9.500 .5L.5 9.500" stroke="#b0b0b0" /></Svg>
            </FormulaTool>
            <FormulaTool $color="#b0b0b0">
              <Svg w={12} h={10}><path d="M1 5L4.500 9L11 1" stroke="#b0b0b0" strokeWidth="1.600" /></Svg>
            </FormulaTool>
            <FormulaTool $color="#555">fx</FormulaTool>
          </FormulaBox>
          <FormulaInput>
            <Svg w={9} h={6}><path d="M1 1L4.500 4.500L8 1" stroke="#666" strokeWidth="1.600" /></Svg>
          </FormulaInput>
        </FormulaArea>

        <SheetArea>
          <Grid>
            <Corner />
            {LETTERS.map((l, i) => (
              <ColLetter key={i} $hidden={i === 2}>{l}</ColLetter>
            ))}
            <RowNum>1</RowNum>
            {HEADS.map((h, i) => (
              <HeadCell key={h} $flag={i === 0 || i === 3} $hidden={i === 2}>
                {h}
                <FilterButton><Down /></FilterButton>
              </HeadCell>
            ))}
            <HeadCell $clip>bind::esri:fieldName</HeadCell>
            {renderRow(2)}
            {ROWS.map((r, i) => renderRow(i + 3, r))}
            {[15, 16, 17, 18, 19].map((n) => renderRow(n))}
          </Grid>
          <VScroll>
            <ScrollButton><Up /></ScrollButton>
            <VThumb />
            <VTrack />
            <ScrollButton><Down /></ScrollButton>
          </VScroll>
          <Highlight $x={16} $y={67} $w={147} />
          <Highlight $x={987} $y={71} $w={180} />
        </SheetArea>

        <TabsBar>
          <TabNav>
            <Side $left $color="#c0c0c0" />
            <Side $color="#217346" />
          </TabNav>
          <SheetTab $w={65} $active>survey</SheetTab>
          <SheetTab $w={68}>choices</SheetTab>
          <SheetTab $w={73}>settings</SheetTab>
          <SheetTab $w={41} $left $plain>typ</SheetTab>
          <TabMore>
            ...
            <Svg w={16} h={16}>
              <circle cx="8" cy="8" r="7.500" stroke="#666" />
              <path d="M8 3.500V12.500M3.500 8H12.500" stroke="#666" strokeWidth="1.500" />
            </Svg>
          </TabMore>
          <TabGrip><i /><i /><i /></TabGrip>
          <HScroll>
            <ScrollButton><Side $left /></ScrollButton>
            <HThumb />
            <Spring />
            <ScrollButton><Side /></ScrollButton>
          </HScroll>
        </TabsBar>

        <StatusBar>
          <StatusText>Ready</StatusText>
          <ViewButton $on>
            <Svg w={13} h={13}>
              <path d="M.5 .5H12.500V12.500H.5ZM.5 4.500H12.500M.5 8.500H12.500M4.500 .5V12.500M8.500 .5V12.500" stroke="#666" />
            </Svg>
          </ViewButton>
          <ViewButton>
            <Svg w={14} h={13}>
              <path d="M.5 .5H13.500V12.500H.5Z" stroke="#555" />
              <path d="M3.500 2.500H10.500V10.500H3.500ZM5 5H9M5 7H9" stroke="#555" />
            </Svg>
          </ViewButton>
          <ViewButton>
            <Svg w={14} h={13}>
              <path d="M.5 .5H13.500V12.500H.5ZM.5 9.500H13.500M7.500 .5V9.500" stroke="#555" />
            </Svg>
          </ViewButton>
          <Zoomer>
            <ZoomSign>-</ZoomSign>
            <ZoomTrack><ZoomThumb /></ZoomTrack>
            <ZoomSign>+</ZoomSign>
            <ZoomValue>100%</ZoomValue>
          </Zoomer>
        </StatusBar>
      </Window>
    </Desktop>
  );
};

export default App;
